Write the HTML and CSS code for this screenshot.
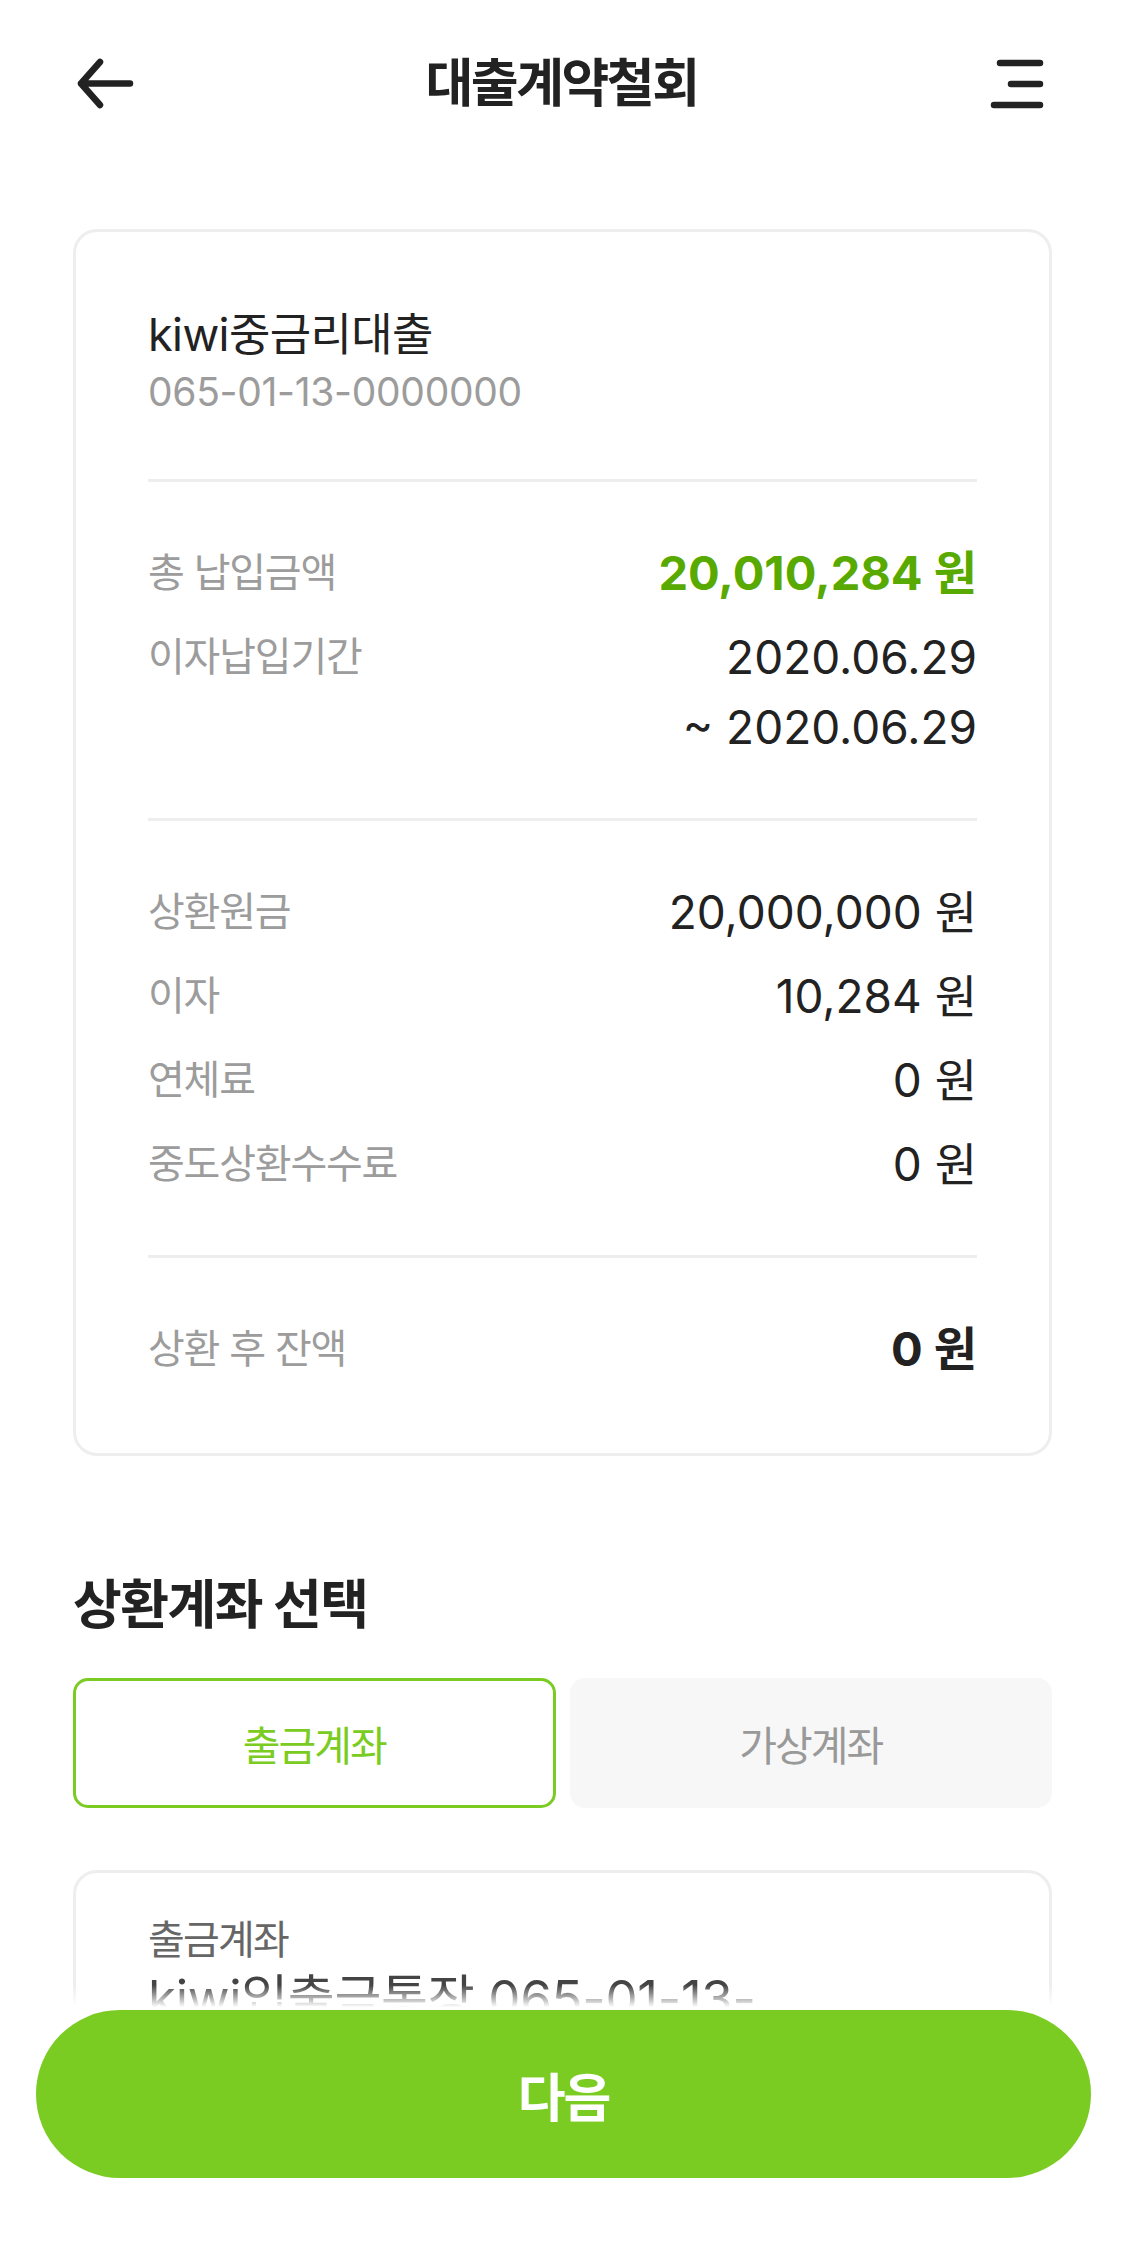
FILE: index.html
```html
<!DOCTYPE html>
<html lang="ko">
<head>
<meta charset="utf-8">
<title>대출계약철회</title>
<link rel="stylesheet" href="styles.css">
</head>
<body>
<header class="topbar">
  <div class="icon-btn">
    <svg viewBox="0 0 60 60" width="60" height="60" aria-hidden="true">
      <path d="M25 8 L6 29.5 L25 51 M6 29.5 H55" fill="none" stroke="#222" stroke-width="6.5" stroke-linecap="round" stroke-linejoin="round"/>
    </svg>
  </div>
  <h1 class="title">대출계약철회</h1>
  <div class="icon-btn">
    <svg viewBox="0 0 60 60" width="60" height="60" aria-hidden="true">
      <path d="M12 9 H52 M23 30 H52 M6 51 H52" fill="none" stroke="#222" stroke-width="6.5" stroke-linecap="round"/>
    </svg>
  </div>
</header>

<main class="content">
  <section class="card">
    <div class="product">
      <div class="product-name">kiwi중금리대출</div>
      <div class="product-no">065-01-13-0000000</div>
    </div>
    <div class="divider"></div>
    <div class="group">
      <div class="row">
        <span class="label">총 납입금액</span>
        <span class="value value-green">20,010,284 원</span>
      </div>
      <div class="row">
        <span class="label">이자납입기간</span>
        <span class="value">2020.06.29<br>~ 2020.06.29</span>
      </div>
    </div>
    <div class="divider"></div>
    <div class="group">
      <div class="row">
        <span class="label">상환원금</span>
        <span class="value">20,000,000 원</span>
      </div>
      <div class="row">
        <span class="label">이자</span>
        <span class="value">10,284 원</span>
      </div>
      <div class="row">
        <span class="label">연체료</span>
        <span class="value">0 원</span>
      </div>
      <div class="row">
        <span class="label">중도상환수수료</span>
        <span class="value">0 원</span>
      </div>
    </div>
    <div class="divider"></div>
    <div class="group">
      <div class="row">
        <span class="label">상환 후 잔액</span>
        <span class="value value-bold">0 원</span>
      </div>
    </div>
  </section>

  <h2 class="section-title">상환계좌 선택</h2>
  <div class="tabs">
    <button class="tab tab-active">출금계좌</button>
    <button class="tab">가상계좌</button>
  </div>

  <section class="account-card">
    <div class="account-label">출금계좌</div>
    <div class="account-value">kiwi입출금통장 065-01-13-</div>
    <div class="account-value">0000000</div>
  </section>
</main>

<div class="bottom-bar">
  <div class="fade"></div>
  <div class="bottom-inner">
    <button class="next-btn">다음</button>
  </div>
</div>
</body>
</html>
```

FILE: styles.css
```css
* { box-sizing: border-box; }

html, body {
  margin: 0;
  padding: 0;
  background: #ffffff;
}

body {
  font-family: Inter, "Noto Sans CJK KR", "Noto Sans", sans-serif;
  color: #222222;
}

.topbar {
  height: 168px;
  display: flex;
  align-items: center;
  padding: 0 77px 0 75px;
}

.icon-btn {
  width: 60px;
  height: 60px;
  flex: none;
}

.icon-btn svg { display: block; }

.title {
  flex: 1;
  margin: 0;
  text-align: center;
  font-size: 52px;
  font-weight: 700;
  letter-spacing: -2.5px;
  color: #222222;
  line-height: 1;
}

.content {
  padding: 61px 73px 0;
}

.card {
  border: 3px solid #eeeeee;
  border-radius: 24px;
  padding: 72px 72px 13px;
}

.product-name {
  font-size: 45px;
  line-height: 62px;
  letter-spacing: -0.6px;
  color: #222222;
}

.product-no {
  font-size: 39px;
  line-height: 52px;
  color: #9c9c9c;
  letter-spacing: -0.3px;
}

.divider {
  height: 3px;
  background: #eeeeee;
}

.product + .divider { margin-top: 61px; }

.group {
  padding: 56px 0;
  display: flex;
  flex-direction: column;
  gap: 14px;
}

.row {
  display: flex;
  justify-content: space-between;
  align-items: flex-start;
  line-height: 70px;
}

.label {
  font-size: 40px;
  color: #9c9c9c;
  letter-spacing: -1.2px;
}

.value {
  font-size: 46px;
  color: #222222;
  text-align: right;
  letter-spacing: 0;
}

.value-green {
  color: #58a900;
  font-weight: 700;
  font-size: 47px;
}

.value-bold {
  font-weight: 700;
  font-size: 47px;
}

.section-title {
  margin: 114px 0 0;
  font-size: 53px;
  line-height: 70px;
  font-weight: 700;
  letter-spacing: -1.5px;
  color: #222222;
}

.tabs {
  margin-top: 38px;
  display: grid;
  grid-template-columns: 1fr 1fr;
  gap: 14px;
}

.tab {
  height: 130px;
  border: 3px solid transparent;
  border-radius: 15px;
  background: #f7f7f7;
  font-family: inherit;
  font-size: 41px;
  letter-spacing: -2px;
  color: #999999;
  padding: 0;
}

.tab-active {
  background: #ffffff;
  border-color: #7bcc22;
  color: #7bcc22;
}

.account-card {
  margin-top: 62px;
  border: 3px solid #eeeeee;
  border-radius: 24px;
  padding: 39px 72px 240px;
}

.account-label {
  font-size: 40px;
  line-height: 56px;
  color: #666666;
  letter-spacing: -1.8px;
}

.account-value {
  font-size: 51px;
  line-height: 62px;
  color: #444444;
  letter-spacing: -0.3px;
  white-space: nowrap;
}

.bottom-bar {
  position: fixed;
  left: 0;
  right: 0;
  bottom: 0;
}

.fade {
  height: 22px;
  background: linear-gradient(to bottom, rgba(255,255,255,0), #ffffff);
}

.bottom-inner {
  background: #ffffff;
  padding: 3px 34px 78px 36px;
}

.next-btn {
  display: block;
  width: 100%;
  height: 168px;
  border: 0;
  border-radius: 84px;
  background: #7bcc22;
  color: #ffffff;
  font-family: inherit;
  font-size: 52px;
  font-weight: 700;
  letter-spacing: -2px;
  padding: 0;
}
```
